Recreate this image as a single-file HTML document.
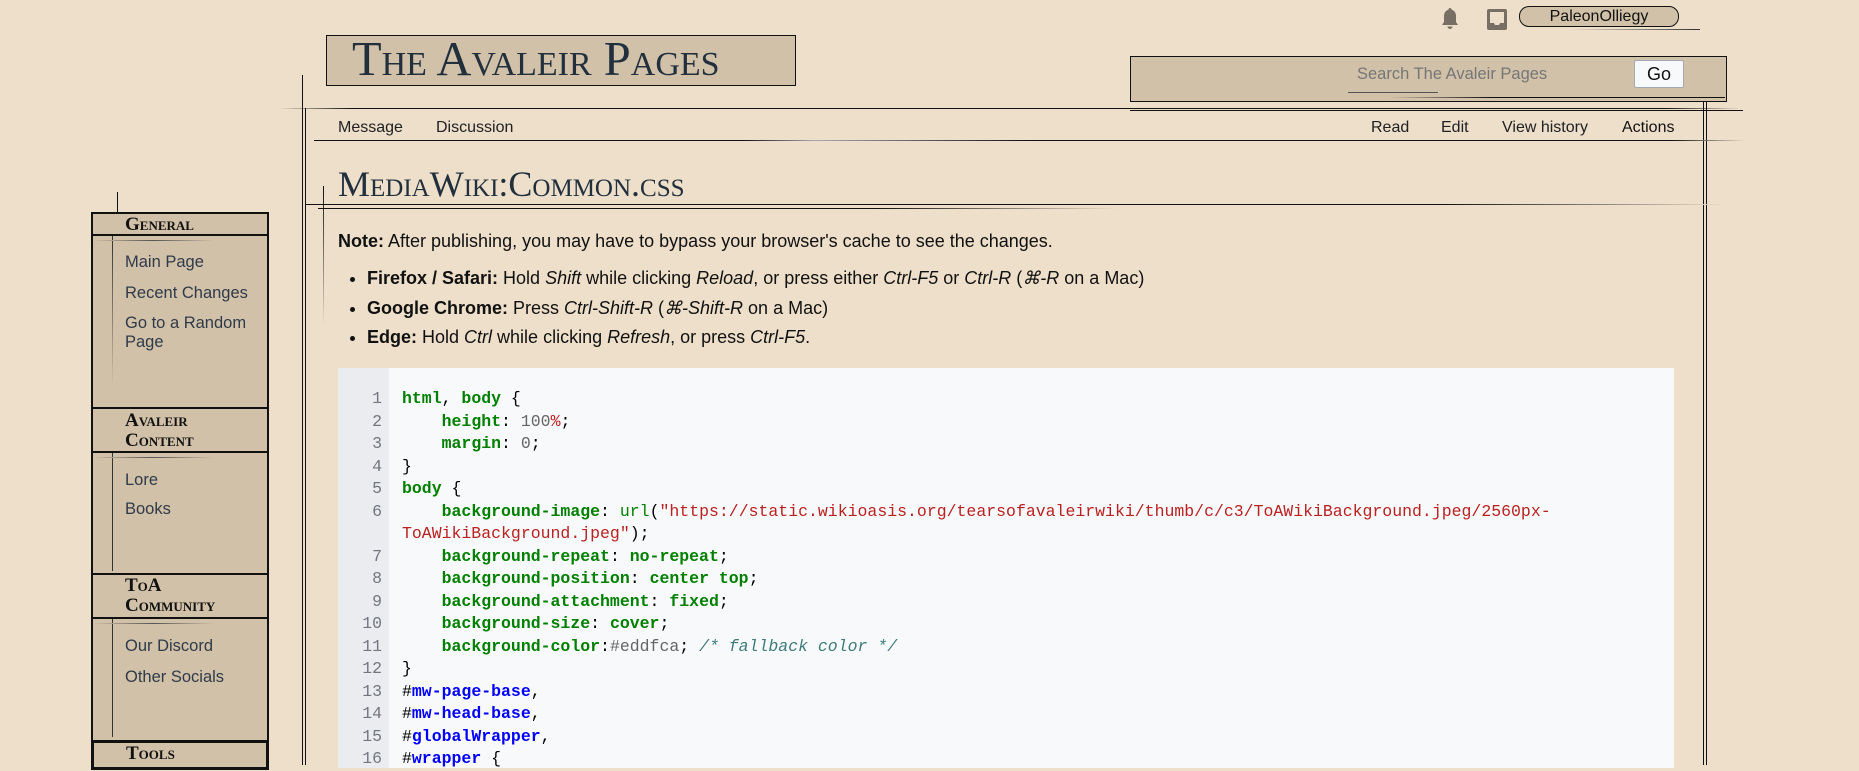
<!DOCTYPE html>
<html><head><meta charset="utf-8"><style>
*{margin:0;padding:0;box-sizing:border-box}
body{width:1859px;height:765px;overflow:hidden;background:#eddfca;font-family:"Liberation Sans",sans-serif;position:relative;color:#202122}
.a{position:absolute}
.hl{position:absolute;height:1px;background:#111}
.vl{position:absolute;width:1px;background:#111}
.sc{font-family:"Liberation Serif",serif;font-variant:small-caps}
.side{position:absolute;left:91px;width:178px;background:#d1c1a8;border:2px solid #111}
.sh{position:absolute;left:91px;width:178px;background:#d1c1a8;border:2px solid #111;font-family:"Liberation Serif",serif;font-variant:small-caps;font-weight:bold;font-size:19px;line-height:20px;padding-left:32px;color:#111}
.side a{position:absolute;left:32px;color:#2f3a4a;font-size:16.5px;line-height:19px;text-decoration:none;white-space:nowrap}
.code{position:absolute;left:338px;top:368px;width:1336px;height:400px;background:#f8f9fa}
.gut{position:absolute;left:0;top:0;width:51px;height:100%;background:#eaecf0}
.ln{position:absolute;left:0;width:44px;text-align:right;color:#72777d}
.cl{position:absolute;left:64px;white-space:pre;color:#000}
.code div{font-family:"Liberation Mono",monospace;font-size:16.5px;line-height:22.5px}
.k{color:#008000;font-weight:bold}.s{color:#ba2121}.n{color:#666}.c{color:#3d7b7b;font-style:italic}.i{color:#0000ff;font-weight:bold}
.tab{position:absolute;top:119px;font-size:16px;color:#202122}
</style></head><body>
<div class="a" style="left:326px;top:35px;width:470px;height:51px;background:#d1c1a8;border:1px solid #111"></div>
<div class="a sc" style="left:352px;top:34px;font-size:48.5px;line-height:52px;color:#22303e">The Avaleir Pages</div>
<svg class="a" style="left:1440px;top:7px" width="20" height="24" viewBox="0 0 20 24"><path d="M10 1c1 0 1.5.8 1.5 1.6C14.5 3.5 16 6 16 9v6l2 3H2l2-3V9c0-3 1.5-5.5 4.5-6.4C8.5 1.8 9 1 10 1zM7.5 19.5h5a2.5 2.5 0 0 1-5 0z" fill="#776f63"/></svg>
<svg class="a" style="left:1486px;top:8px" width="22" height="24" viewBox="0 0 22 24"><rect x="1" y="1" width="20" height="21" rx="2" fill="#776f63"/><path d="M4 4h14v11h-4l-1 2h-4l-1-2H4z" fill="#eddfca"/></svg>
<div class="a" style="left:1519px;top:6px;width:160px;height:21px;border:1px solid #111;border-radius:10px;background:#d1c1a8;text-align:center;font-size:16px;line-height:19px;color:#111">PaleonOlliegy</div>
<div class="hl" style="left:1570px;top:29px;width:130px;background:linear-gradient(90deg,#eddfca,#333)"></div>
<div class="a" style="left:1130px;top:56px;width:597px;height:46px;background:#d1c1a8;border:1px solid #111"></div>
<div class="a" style="left:1357px;top:65px;font-size:16.5px;color:#767676">Search The Avaleir Pages</div>
<div class="a" style="left:1634px;top:60px;width:50px;height:28px;background:#f8f9fa;border:1px solid #a2a9b1;border-radius:2px;font-size:18px;text-align:center;line-height:26px;color:#111">Go</div>
<div class="hl" style="left:1348px;top:92px;width:90px;background:#555"></div>
<div class="hl" style="left:1390px;top:97px;width:335px;background:linear-gradient(90deg,#d1c1a8,#111 30%)"></div>
<div class="hl" style="left:279px;top:108px;width:1460px;background:linear-gradient(90deg,#eddfca,#111 5%,#111 95%,#eddfca)"></div>
<div class="hl" style="left:1130px;top:110px;width:613px;background:#111"></div>
<div class="vl" style="left:302px;top:75px;height:690px"></div>
<div class="vl" style="left:305px;top:108px;height:657px"></div>
<div class="vl" style="left:1703px;top:102px;height:663px"></div>
<div class="vl" style="left:1706px;top:102px;height:663px"></div>
<div class="hl" style="left:314px;top:140px;width:1430px;background:linear-gradient(90deg,#111,#111 30%,#aaa 35%,#111 50%,#111 95%,#eddfca)"></div>
<div class="vl" style="left:323px;top:186px;height:140px;background:linear-gradient(#111,#eddfca)"></div>
<div class="tab" style="left:338px">Message</div>
<div class="tab" style="left:436px">Discussion</div>
<div class="tab" style="left:1371px">Read</div>
<div class="tab" style="left:1441px">Edit</div>
<div class="tab" style="left:1502px">View history</div>
<div class="tab" style="left:1622px;color:#111">Actions</div>
<div class="a sc" style="left:338px;top:164px;font-size:36px;line-height:40px;color:#22303e">MediaWiki:Common.css</div>
<div class="hl" style="left:306px;top:204px;width:1420px;background:linear-gradient(90deg,#111,#111 80%,#eddfca)"></div>
<div class="hl" style="left:318px;top:208px;width:800px;background:linear-gradient(90deg,#111,#111 70%,#eddfca)"></div>
<div class="a" style="left:338px;top:231px;font-size:18px;line-height:21px;color:#111"><b>Note:</b> After publishing, you may have to bypass your browser's cache to see the changes.</div>
<ul class="a" style="left:367px;top:264px;font-size:18px;line-height:29.5px;color:#111">
<li><b>Firefox / Safari:</b> Hold <i>Shift</i> while clicking <i>Reload</i>, or press either <i>Ctrl-F5</i> or <i>Ctrl-R</i> (<i>⌘-R</i> on a Mac)</li>
<li><b>Google Chrome:</b> Press <i>Ctrl-Shift-R</i> (<i>⌘-Shift-R</i> on a Mac)</li>
<li><b>Edge:</b> Hold <i>Ctrl</i> while clicking <i>Refresh</i>, or press <i>Ctrl-F5</i>.</li>
</ul>
<div class="code"><div class="gut"></div>
<div class="ln" style="top:20px">1<br>2<br>3<br>4<br>5<br>6<br><br>7<br>8<br>9<br>10<br>11<br>12<br>13<br>14<br>15<br>16</div>
<div class="cl" style="top:20px"><span class="k">html</span>, <span class="k">body</span> {
    <span class="k">height</span>: <span class="n">100</span><span class="s">%</span>;
    <span class="k">margin</span>: <span class="n">0</span>;
}
<span class="k">body</span> {
    <span class="k">background-image</span>: <span class="k" style="font-weight:normal">url</span>(<span class="s">"https://static.wikioasis.org/tearsofavaleirwiki/thumb/c/c3/ToAWikiBackground.jpeg/2560px-</span>
<span class="s">ToAWikiBackground.jpeg"</span>);
    <span class="k">background-repeat</span>: <span class="k">no-repeat</span>;
    <span class="k">background-position</span>: <span class="k">center top</span>;
    <span class="k">background-attachment</span>: <span class="k">fixed</span>;
    <span class="k">background-size</span>: <span class="k">cover</span>;
    <span class="k">background-color</span>:<span class="n">#eddfca</span>; <span class="c">/* fallback color */</span>
}
#<span class="i">mw-page-base</span>,
#<span class="i">mw-head-base</span>,
#<span class="i">globalWrapper</span>,
#<span class="i">wrapper</span> {</div>
</div>
<div class="vl" style="left:117px;top:192px;height:22px"></div>
<div class="sh" style="top:212px;height:24px;padding-top:1px">General</div>
<div class="side" style="top:234px;height:175px"><a style="top:17px">Main Page</a><a style="top:48px">Recent Changes</a><a style="top:78px">Go to a Random</a><a style="top:97px">Page</a></div>
<div class="sh" style="top:407px;height:46px;padding-top:2px">Avaleir<br>Content</div>
<div class="side" style="top:451px;height:124px"><a style="top:18px">Lore</a><a style="top:47px">Books</a></div>
<div class="sh" style="top:573px;height:46px;padding-top:1px">ToA<br>Community</div>
<div class="side" style="top:617px;height:125px"><a style="top:18px">Our Discord</a><a style="top:49px">Other Socials</a></div>
<div class="sh" style="top:740px;height:30px;border-width:3px;padding-top:1px">Tools</div>
<div class="vl" style="left:112px;top:236px;height:150px;background:linear-gradient(#333,#d1c1a8)"></div>
<div class="hl" style="left:93px;top:240px;width:120px;background:linear-gradient(90deg,#d1c1a8,#555,#d1c1a8)"></div>
<div class="vl" style="left:112px;top:453px;height:118px;background:#333"></div>
<div class="hl" style="left:93px;top:457px;width:120px;background:linear-gradient(90deg,#d1c1a8,#555,#d1c1a8)"></div>
<div class="vl" style="left:112px;top:619px;height:118px;background:#333"></div>
<div class="hl" style="left:93px;top:623px;width:120px;background:linear-gradient(90deg,#d1c1a8,#555,#d1c1a8)"></div>
</body></html>
